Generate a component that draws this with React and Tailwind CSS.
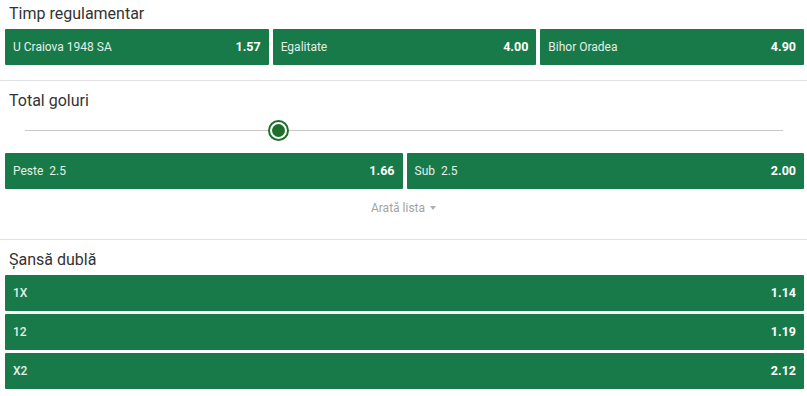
import React from 'react'

// Betting markets panel: 1X2, total goals with line slider, double chance
const GREEN = 'bg-[#187a48]'

const OddButton = ({ label, odd, strong = false, className = '' }) => (
  <button className={`${GREEN} h-[36px] flex items-center justify-between pl-[8px] pr-[8px] rounded-[1px] ${className}`}>
    <span className={`text-[12px] text-[#e3efe8] whitespace-pre ${strong ? 'font-medium' : ''}`}>{label}</span>
    <span className="text-[12.5px] font-bold text-white">{odd}</span>
  </button>
)

const Title = ({ children }) => (
  <div className="pl-[9px] text-[16px] leading-[19px] text-[#333333]">{children}</div>
)

const Divider = () => <div className="h-px bg-[#e2e2e2]" />

const LineSlider = ({ value = 0.334 }) => (
  <div className="relative h-[40px] ml-[25px] mr-[24px] flex items-center">
    <div className="h-px w-full bg-[#c8c8c8]" />
    <div
      className="absolute top-1/2 w-[21px] h-[21px] -ml-[10.5px] -mt-[10.5px] rounded-full border-2 border-[#1f6f2c] bg-white flex items-center justify-center"
      style={{ left: `${value * 100}%` }}
    >
      <div className="w-[13px] h-[13px] rounded-full bg-[#1f6f2c]" />
    </div>
  </div>
)

export default function App() {
  return (
    <div className="w-[807px] h-[396px] bg-white overflow-hidden" style={{ fontFamily: 'Roboto, "Liberation Sans", sans-serif' }}>
      {/* Timp regulamentar */}
      <div className="pt-[4px] pb-[15px]">
        <Title>Timp regulamentar</Title>
        <div className="mt-[6px] grid grid-cols-3 gap-[4px] pl-[5px] pr-[3px]">
          <OddButton label="U Craiova 1948 SA" odd="1.57" />
          <OddButton label="Egalitate" odd="4.00" />
          <OddButton label="Bihor Oradea" odd="4.90" />
        </div>
      </div>
      <Divider />

      {/* Total goluri */}
      <div className="pt-[10px] pb-[23px]">
        <Title>Total goluri</Title>
        <LineSlider value={0.334} />
        <div className="mt-[3px] grid grid-cols-2 gap-[4px] pl-[5px] pr-[3px]">
          <OddButton label="Peste  2.5" odd="1.66" />
          <OddButton label="Sub  2.5" odd="2.00" />
        </div>
        <div className="mt-[11px] flex items-center justify-center gap-[5px] text-[12px] leading-[16px] text-[#a3a3a3]">
          <span>Arată lista</span>
          <svg width="6" height="4" viewBox="0 0 6 4"><path d="M0 0 L6 0 L3 4 Z" fill="#b0b0b0" /></svg>
        </div>
      </div>
      <Divider />

      {/* Sansa dubla */}
      <div className="pt-[10px]">
        <Title>Șansă dublă</Title>
        <div className="mt-[6px] flex flex-col gap-[3px] pl-[5px] pr-[3px]">
          <OddButton label="1X" odd="1.14" strong />
          <OddButton label="12" odd="1.19" strong />
          <OddButton label="X2" odd="2.12" strong />
        </div>
      </div>
    </div>
  )
}
